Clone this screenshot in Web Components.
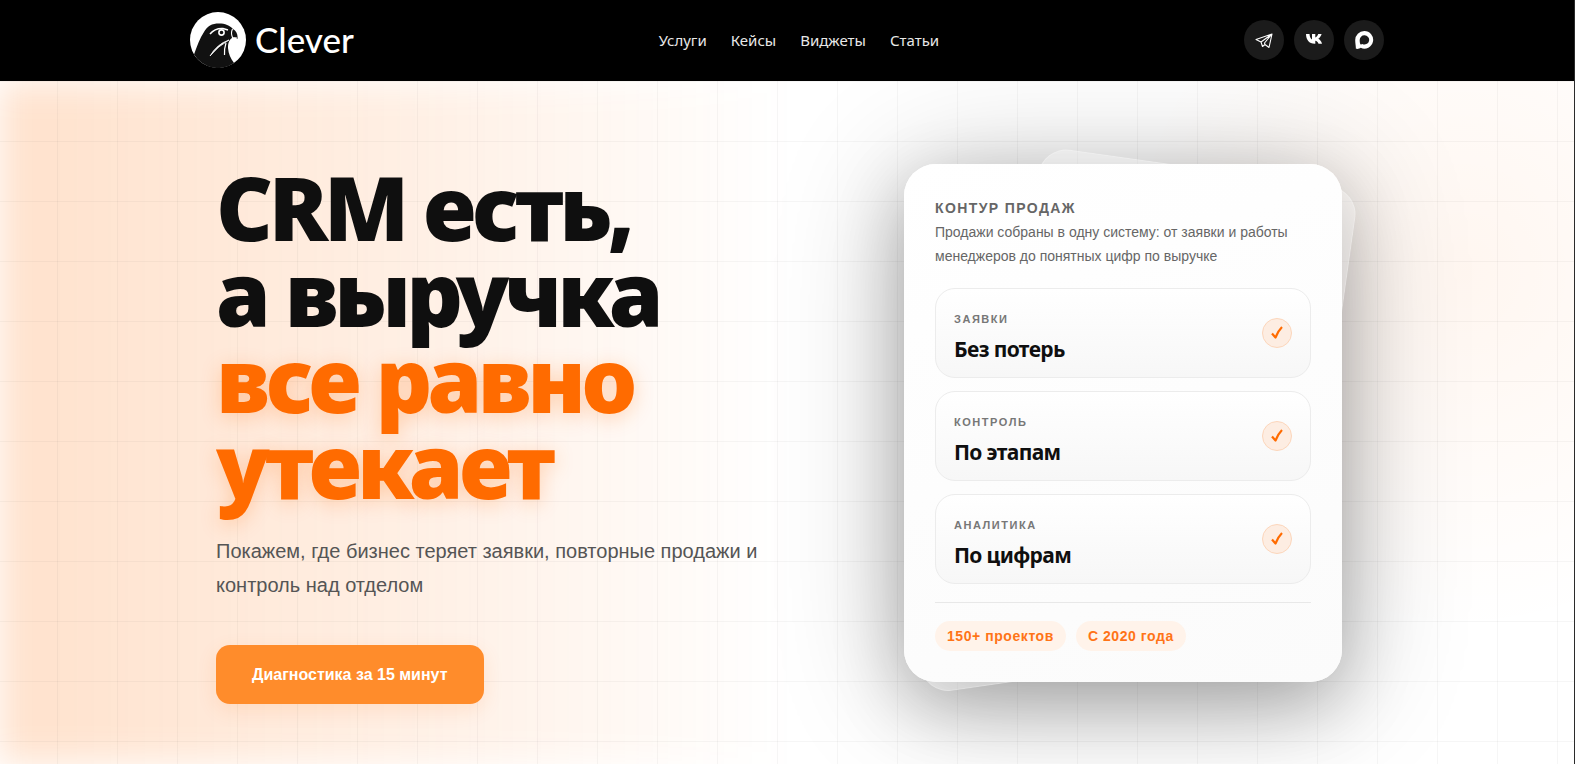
<!DOCTYPE html>
<html lang="ru">
<head>
<meta charset="UTF-8">
<meta name="viewport" content="width=device-width, initial-scale=1.0">
<title>Clever</title>
<style>
    html, body {
        margin: 0;
        min-height: 100%;
    }
    body {
        display: flex;
        flex-direction: column;
        min-height: 100vh;
        box-sizing: border-box;
        border-right: 1px solid #2b2b2b;
        background: #fff;
        color: #0f0f0f;
        font-family: "Liberation Sans", Arial, sans-serif;
        --accent: #ff6b00;
        --heading: "Noto Sans", "Open Sans", sans-serif;
    }
</style>
</head>
<body>
    <site-header>
        <nav-link href="#services">Услуги</nav-link>
        <nav-link href="#cases">Кейсы</nav-link>
        <nav-link href="#widgets">Виджеты</nav-link>
        <nav-link href="#articles">Статьи</nav-link>
        <social-link slot="social" icon="telegram" label="Telegram"></social-link>
        <social-link slot="social" icon="vk" label="VK"></social-link>
        <social-link slot="social" icon="max" label="MAX"></social-link>
    </site-header>

    <hero-section>
        <span slot="title">CRM есть,<br>а выручка</span>
        <span slot="accent">все равно<br>утекает</span>
        <span slot="text">Покажем, где бизнес теряет заявки, повторные продажи и контроль над отделом</span>
        <span slot="action">Диагностика за 15 минут</span>
        <sales-card slot="card">
            <span slot="title">Контур продаж</span>
            <span slot="text">Продажи собраны в одну систему: от заявки и работы менеджеров до понятных цифр по выручке</span>
            <sales-step label="Заявки">Без потерь</sales-step>
            <sales-step label="Контроль">По этапам</sales-step>
            <sales-step label="Аналитика">По цифрам</sales-step>
            <info-chip slot="chips">150+ проектов</info-chip>
            <info-chip slot="chips">С 2020 года</info-chip>
        </sales-card>
    </hero-section>

<script>
class SiteHeader extends HTMLElement {
    constructor() {
        super();
        this.attachShadow({ mode: 'open' });
        this.shadowRoot.innerHTML = `
            <style>
                :host {
                    display: block;
                    background: #000;
                }
                header {
                    display: flex;
                    align-items: center;
                    justify-content: space-between;
                    max-width: 1194px;
                    height: 79px;
                    margin: 0 auto;
                    padding-bottom: 2px;
                }
                .logo {
                    display: flex;
                    align-items: center;
                    gap: 9px;
                    color: #fff;
                    font: 500 35px/52px Lato, sans-serif;
                    text-decoration: none;
                }
                .logo svg {
                    width: 56px;
                    height: 56px;
                }
                .logo span {
                    padding-bottom: 2px;
                }
                nav {
                    display: flex;
                    gap: 24px;
                }
                .social {
                    display: flex;
                    gap: 10px;
                }
            </style>
            <header>
                <a class="logo" href="#">
                    <svg viewBox="0 0 56 56" aria-hidden="true">
                        <circle cx="28" cy="28" r="28" fill="#fff"/>
                        <path d="M4 42.5C7 34 10 26 14 20C17 14 22 11.5 29 11.5C35 11.5 40 13.5 43 17C46.5 19 48 22.5 47.5 27C46 25.5 44 25.5 42 26C39 28 38 31 38 36C38.5 42 40.5 46 44 51A28 28 0 0 1 4 42.5Z" fill="#111"/>
                        <path d="M20 22Q25 16 33 16.5L38 18" fill="none" stroke="#fff" stroke-width="1.6"/>
                        <circle cx="31.5" cy="20.5" r="2.6" fill="#111" stroke="#fff" stroke-width="1.6"/>
                        <path d="M42.5 17Q40.5 21 42.5 25.5L47 26" fill="none" stroke="#fff" stroke-width="1.1"/>
                        <path d="M20 44Q27 32 39 28Q28 34 20 44Z" fill="#fff" stroke="#fff" stroke-width="0.8"/>
                        <path d="M36 31Q34 37 34.5 43" fill="none" stroke="#fff" stroke-width="1.2"/>
                    </svg>
                    <span>Clever</span>
                </a>
                <nav><slot></slot></nav>
                <div class="social"><slot name="social"></slot></div>
            </header>
        `;
    }
}

class NavLink extends HTMLElement {
    constructor() {
        super();
        this.attachShadow({ mode: 'open' });
        this.shadowRoot.innerHTML = `
            <style>
                :host {
                    display: block;
                }
                a {
                    color: #e8e8e8;
                    font: 400 15px/24px var(--heading);
                    text-decoration: none;
                }
                a:hover {
                    color: var(--accent);
                }
            </style>
            <a><slot></slot></a>
        `;
        this.shadowRoot.querySelector('a').href = this.getAttribute('href');
    }
}

const socialIcons = {
    telegram: '<path d="M2 9.5L18 4L15 17.5L11 14.5L8.5 16.5L7 12L2 9.5ZM7 12L18 4L10.5 13L11 14.5" fill="none" stroke="#fff" stroke-width="1.1" stroke-linejoin="round"/>',
    vk: '<path d="M2 4H5.5C5.7 7 6.7 8.8 8 9.5V4H11.3V7.5C12.5 7.2 13.6 5.8 14.2 4H17.6C17 6.2 15.7 7.8 14.3 8.8C16 9.7 17.4 11.4 18 13.7H14.5C13.9 12 12.7 11 11.3 10.8V13.7H10.8C5 13.7 2.1 9.8 2 4Z" fill="#fff"/>',
    max: '<path fill-rule="evenodd" d="M10.2 1A8.8 8.8 0 1 1 6.7 17.8C5.5 18.9 3 19.3 1.8 18.6C2 16 1.2 13.5 1.2 10A9 9 0 0 1 10.2 1ZM10.3 5.3A4.6 4.6 0 0 0 5.7 9.9C5.6 12 6.1 14.6 7 14.5C7.6 14.4 7.9 14 8.3 13.9A4.6 4.6 0 1 0 10.3 5.3Z" fill="#fff"/>'
};

class SocialLink extends HTMLElement {
    constructor() {
        super();
        this.attachShadow({ mode: 'open' });
        this.shadowRoot.innerHTML = `
            <style>
                :host {
                    display: block;
                }
                a {
                    display: flex;
                    align-items: center;
                    justify-content: center;
                    width: 40px;
                    height: 40px;
                    border-radius: 50%;
                    background: #1b1b1b;
                }
                svg {
                    width: 20px;
                    height: 20px;
                }
            </style>
            <a href="#"><svg viewBox="0 0 20 20" aria-hidden="true">${socialIcons[this.getAttribute('icon')]}</svg></a>
        `;
        this.shadowRoot.querySelector('a').setAttribute('aria-label', this.getAttribute('label'));
    }
}

class HeroSection extends HTMLElement {
    constructor() {
        super();
        this.attachShadow({ mode: 'open' });
        this.shadowRoot.innerHTML = `
            <style>
                :host {
                    display: block;
                    position: relative;
                    flex: 1;
                    overflow: hidden;
                    isolation: isolate;
                    background: radial-gradient(ellipse 340px 360px at 93% 28%, rgba(255, 107, 0, 0.06), transparent);
                }
                .glow {
                    position: absolute;
                    inset: 0;
                    z-index: -1;
                    background: linear-gradient(90deg, rgba(255, 107, 0, 0.2), rgba(255, 107, 0, 0.11) 25%, transparent 50%);
                    filter: blur(18px);
                }
                .grid {
                    position: absolute;
                    inset: 0;
                    z-index: -1;
                    background:
                        linear-gradient(rgba(0, 0, 0, 0.035) 1px, transparent 1px) 0 60px / 60px 60px,
                        linear-gradient(90deg, rgba(0, 0, 0, 0.035) 1px, transparent 1px) 57px 0 / 60px 60px;
                }
                .content {
                    display: grid;
                    grid-template-columns: minmax(0, 1fr) 470px;
                    gap: 48px;
                    max-width: 1142px;
                    margin: 0 auto;
                    padding: 83px 0 40px;
                }
                h1 {
                    margin: 0;
                    font: 900 88px/86px var(--heading);
                    letter-spacing: -0.05em;
                }
                .accent {
                    display: block;
                    color: var(--accent);
                    text-shadow: 0 4px 20px rgba(255, 107, 0, 0.25);
                }
                p {
                    max-width: 560px;
                    margin: 26px 0 43px;
                    color: #555;
                    font-size: 20px;
                    line-height: 34px;
                }
                button {
                    padding: 0 36px;
                    border: 0;
                    border-radius: 14px;
                    background: #ff8c2b;
                    box-shadow: 0 6px 20px rgba(255, 107, 0, 0.12);
                    color: #fff;
                    font: bold 16px/59px "Liberation Sans", Arial, sans-serif;
                    cursor: pointer;
                }
                .side {
                    display: flex;
                    align-items: flex-start;
                    justify-content: center;
                }
            </style>
            <div class="glow"></div>
            <div class="grid"></div>
            <div class="content">
                <div>
                    <h1><slot name="title"></slot><span class="accent"><slot name="accent"></slot></span></h1>
                    <p><slot name="text"></slot></p>
                    <button type="button"><slot name="action"></slot></button>
                </div>
                <div class="side"><slot name="card"></slot></div>
            </div>
        `;
    }
}

class SalesCard extends HTMLElement {
    constructor() {
        super();
        this.attachShadow({ mode: 'open' });
        this.shadowRoot.innerHTML = `
            <style>
                :host {
                    display: block;
                    position: relative;
                    flex: 0 1 438px;
                }
                .back {
                    position: absolute;
                    box-sizing: border-box;
                    border: 1px solid rgba(255, 255, 255, 0.2);
                    border-radius: 28px;
                    background: rgba(255, 255, 255, 0.35);
                }
                .back.top {
                    top: 3px;
                    right: -2px;
                    width: 320px;
                    height: 240px;
                    transform: rotate(8deg);
                }
                .back.bottom {
                    bottom: 2px;
                    left: 8px;
                    width: 220px;
                    height: 160px;
                    transform: rotate(-8deg);
                }
                .shade {
                    position: absolute;
                    inset: 0;
                    border-radius: 32px;
                    box-shadow: 0 24px 70px rgba(0, 0, 0, 0.24), 0 10px 130px rgba(0, 0, 0, 0.24);
                }
                .card {
                    position: relative;
                    padding: 32px 31px 31px;
                    border-radius: 32px;
                    background: linear-gradient(160deg, #fff, #fbfbfb);
                }
                h2, p {
                    margin: 0;
                    color: #666;
                    font-size: 14px;
                    line-height: 24px;
                }
                h2 {
                    letter-spacing: 0.1em;
                    text-transform: uppercase;
                }
                .steps {
                    display: grid;
                    gap: 13px;
                    margin: 20px 0 18px;
                }
                .chips {
                    display: flex;
                    gap: 10px;
                    padding-top: 18px;
                    border-top: 1px solid #e8e8e8;
                }
            </style>
            <div class="shade"></div>
            <div class="back top"></div>
            <div class="back bottom"></div>
            <div class="card">
                <h2><slot name="title"></slot></h2>
                <p><slot name="text"></slot></p>
                <div class="steps"><slot></slot></div>
                <div class="chips"><slot name="chips"></slot></div>
            </div>
        `;
    }
}

class SalesStep extends HTMLElement {
    constructor() {
        super();
        this.attachShadow({ mode: 'open' });
        this.shadowRoot.innerHTML = `
            <style>
                :host {
                    display: flex;
                    align-items: center;
                    justify-content: space-between;
                    box-sizing: border-box;
                    height: 90px;
                    padding: 0 18px;
                    border: 1px solid #ececec;
                    border-radius: 20px;
                    background: linear-gradient(#fff, #f7f7f7);
                }
                .text {
                    padding-top: 8px;
                }
                .label {
                    margin-bottom: 4px;
                    color: #777;
                    font-size: 11px;
                    font-weight: bold;
                    line-height: 20px;
                    letter-spacing: 0.14em;
                    text-transform: uppercase;
                }
                .value {
                    font: 700 21px/32px var(--heading);
                    letter-spacing: -0.03em;
                }
                .check {
                    display: flex;
                    align-items: center;
                    justify-content: center;
                    box-sizing: border-box;
                    width: 30px;
                    height: 30px;
                    border: 1px solid #fcd6bb;
                    border-radius: 50%;
                    background: #fdede2;
                }
            </style>
            <div class="text">
                <div class="label"></div>
                <div class="value"><slot></slot></div>
            </div>
            <span class="check">
                <svg width="14" height="14" viewBox="0 0 14 14" aria-hidden="true">
                    <path d="M2 7.5L5.5 11.5Q8 5 12 1" fill="none" stroke="#ff6b00" stroke-width="2.2" stroke-linejoin="round"/>
                </svg>
            </span>
        `;
        this.shadowRoot.querySelector('.label').textContent = this.getAttribute('label');
    }
}

class InfoChip extends HTMLElement {
    constructor() {
        super();
        this.attachShadow({ mode: 'open' });
        this.shadowRoot.innerHTML = `
            <style>
                :host {
                    display: block;
                    padding: 0 12px;
                    border-radius: 15px;
                    background: #fff3ea;
                    color: #ff7417;
                    font-size: 14px;
                    font-weight: bold;
                    line-height: 30px;
                    letter-spacing: 0.04em;
                }
            </style>
            <slot></slot>
        `;
    }
}

customElements.define('site-header', SiteHeader);
customElements.define('nav-link', NavLink);
customElements.define('social-link', SocialLink);
customElements.define('hero-section', HeroSection);
customElements.define('sales-card', SalesCard);
customElements.define('sales-step', SalesStep);
customElements.define('info-chip', InfoChip);
</script>
</body>
</html>
